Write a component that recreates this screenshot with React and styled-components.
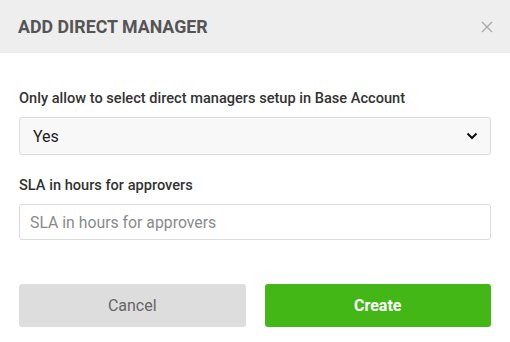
import React from "react";
import styled, { createGlobalStyle } from "styled-components";

const Global = createGlobalStyle`
  html, body { margin: 0; padding: 0; background: #ffffff; }
  body { font-family: Roboto, "Liberation Sans", Arial, sans-serif; }
  * { box-sizing: border-box; }
`;

const Modal = styled.div`
  width: 510px;
  height: 342px;
  background: #ffffff;
  display: flex;
  flex-direction: column;
`;

const Header = styled.div`
  height: 53px;
  background: #eeeeee;
  display: flex;
  align-items: center;
  justify-content: space-between;
  padding: 0 17px 0 18px;
`;

const Title = styled.h2`
  margin: 0;
  font-size: 17.8px;
  font-weight: 700;
  color: #555555;
  text-transform: uppercase;
  line-height: 20px;
`;

const Close = styled.button`
  border: 0;
  background: transparent;
  padding: 0;
  width: 12px;
  height: 12px;
  display: flex;
  align-items: center;
  justify-content: center;
  color: #a9a9a9;
  cursor: pointer;
`;

const Body = styled.div`
  padding: 36px 19px 0 19px;
  display: flex;
  flex-direction: column;
`;

const Field = styled.div`
  display: flex;
  flex-direction: column;
  margin-bottom: ${(p) => p.$mb || 0}px;
`;

const Label = styled.label`
  font-size: 14.6px;
  font-weight: 500;
  color: #333333;
  line-height: 18px;
  margin-bottom: 10px;
`;

const SelectBox = styled.div`
  position: relative;
  height: 38px;
  background: #f8f8f8;
  border: 1px solid #dcdcdc;
  border-radius: 3px;
  display: flex;
  align-items: center;
  padding: 0 12px 0 13px;
  justify-content: space-between;
  font-size: 16px;
  color: #222222;
`;

const Input = styled.input`
  height: 36px;
  border: 1px solid #dcdcdc;
  border-radius: 3px;
  padding: 0 10px;
  font-family: Roboto, "Liberation Sans", Arial, sans-serif;
  font-size: 15.8px;
  color: #222;
  outline: none;
  &::placeholder { color: #8a8a8a; }
`;

const Actions = styled.div`
  display: grid;
  grid-template-columns: 1fr 1fr;
  gap: 19px;
  margin-top: 44px;
`;

const Button = styled.button`
  height: 43px;
  border: 0;
  border-radius: 3px;
  font-family: Roboto, "Liberation Sans", Arial, sans-serif;
  font-size: 16px;
  font-weight: ${(p) => (p.$primary ? 700 : 400)};
  background: ${(p) => (p.$primary ? "#42b716" : "#dddddd")};
  color: ${(p) => (p.$primary ? "#ffffff" : "#666666")};
  cursor: pointer;
`;

export default function App() {
  return (
    <>
      <Global />
      <Modal>
        <Header>
          <Title>Add Direct Manager</Title>
          <Close aria-label="Close">
            <svg width="12" height="12" viewBox="0 0 12 12">
              <path d="M1 1L11 11M11 1L1 11" stroke="currentColor" strokeWidth="1.4" />
            </svg>
          </Close>
        </Header>
        <Body>
          <Field $mb={21}>
            <Label>Only allow to select direct managers setup in Base Account</Label>
            <SelectBox>
              <span>Yes</span>
              <svg width="12" height="8" viewBox="0 0 12 8">
                <path d="M1.5 1.5L6 6L10.5 1.5" fill="none" stroke="#111" strokeWidth="2" />
              </svg>
            </SelectBox>
          </Field>
          <Field>
            <Label>SLA in hours for approvers</Label>
            <Input placeholder="SLA in hours for approvers" />
          </Field>
          <Actions>
            <Button>Cancel</Button>
            <Button $primary>Create</Button>
          </Actions>
        </Body>
      </Modal>
    </>
  );
}
